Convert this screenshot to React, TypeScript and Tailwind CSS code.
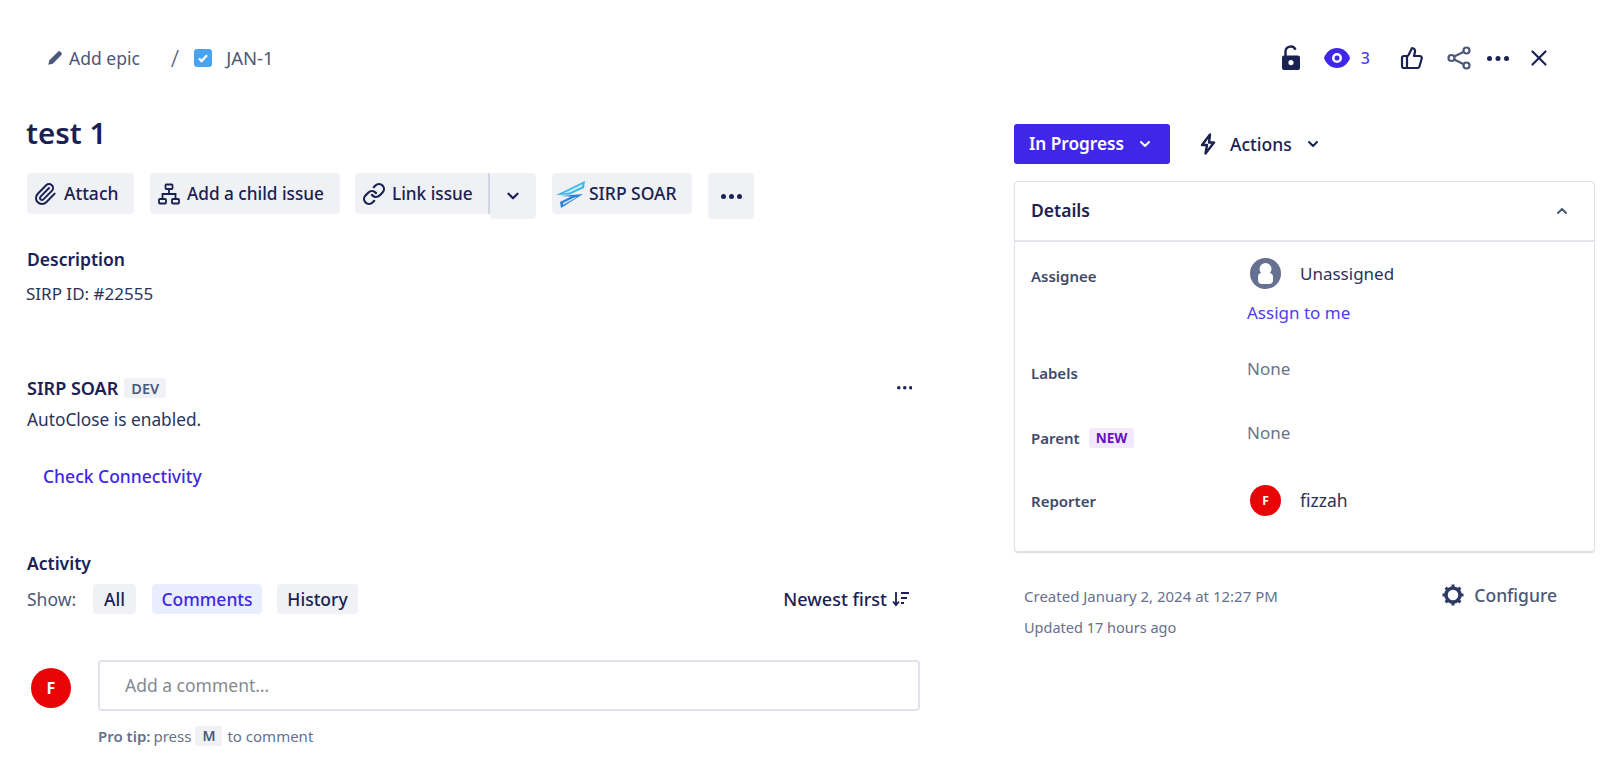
import { ChevronDown, ChevronUp, Link, Paperclip, ThumbsUp, X } from "lucide-react";

function Dots({ size = 4, gap = 3 }: { size?: number; gap?: number }) {
  return (
    <svg width={size * 3 + gap * 2} height={size} viewBox={`0 0 ${size * 3 + gap * 2} ${size}`} fill="#1a2153">
      <circle cx={size / 2} cy={size / 2} r={size / 2} />
      <circle cx={size * 1.5 + gap} cy={size / 2} r={size / 2} />
      <circle cx={size * 2.5 + gap * 2} cy={size / 2} r={size / 2} />
    </svg>
  );
}

function TreeIcon() {
  return (
    <svg width="24" height="24" viewBox="0 0 24 24" fill="none" stroke="#1a2153" strokeWidth="1.8">
      <rect x="8.5" y="2.5" width="7" height="4.5" rx="0.8" />
      <rect x="2" y="17" width="7" height="4.5" rx="0.8" />
      <rect x="15" y="17" width="7" height="4.5" rx="0.8" />
      <path d="M12 7v5M5.5 17v-5h13v5" />
    </svg>
  );
}

function SirpLogo() {
  return (
    <svg width="32" height="32" viewBox="0 0 32 32">
      <path d="M1 17 L30 3 L29 10 L15 16.500 Z" fill="#38b8e8" />
      <path d="M8 15.500 L27.500 6 L27 8.800 L15 14.500 Z" fill="#c5ebf8" />
      <path d="M5 18 L28 16 L6 30 L5 24 L16 18.500 Z" fill="#2f7fd8" />
      <path d="M8 24.800 L19 19.500 L22 19.200 L8 27 Z" fill="#c9def6" />
    </svg>
  );
}

function Btn({ children, className = "" }: { children: React.ReactNode; className?: string }) {
  return (
    <div className={`flex items-center h-[41px] bg-[#f0f1f4] rounded-[4px] text-[#1a2153] text-[17.5px] font-medium ${className}`}>
      {children}
    </div>
  );
}

function Avatar({ size, text }: { size: string; text: string }) {
  return (
    <div className={`${size} shrink-0 rounded-full bg-[#e80505] text-white font-bold flex items-center justify-center`}>
      <span className={text}>F</span>
    </div>
  );
}

function DetailRow({ label, children, className = "" }: { label: React.ReactNode; children: React.ReactNode; className?: string }) {
  return (
    <div className={`flex ${className}`}>
      <div className="w-[232px] pl-[16px] -mt-[1px] text-[15px] font-semibold text-[#3f4a6b] flex items-center gap-[9px] self-start h-[24px]">
        {label}
      </div>
      <div>{children}</div>
    </div>
  );
}

export default function App() {
  return (
    <div className="h-[783px] w-full bg-white overflow-hidden text-[17px] text-[#2b3358] font-['Noto_Sans',sans-serif]">
      <div className="flex items-center justify-between h-[40px] mt-[38px]">
        <div className="flex items-center pl-[46px] text-[#4c5878] text-[17.5px]">
          <svg width="18" height="18" viewBox="0 0 24 24" fill="#4c5878">
            <path d="M3 21l1.5-6L16 3.5a2.2 2.2 0 0 1 3 0l1.5 1.5a2.2 2.2 0 0 1 0 3L9 19.5 3 21z" />
          </svg>
          <span className="ml-[5px]">Add epic</span>
          <span className="ml-[31px] text-[24px] font-light">/</span>
          <div className="ml-[15px] w-[18px] h-[18px] rounded-[3px] bg-[#4aa3ee] flex items-center justify-center">
            <svg width="12" height="12" viewBox="0 0 12 12" fill="none" stroke="#fff" strokeWidth="2.2">
              <path d="M2 6.5l2.6 2.6L10 3.2" />
            </svg>
          </div>
          <span className="ml-[14px] text-[18.5px]">JAN-1</span>
        </div>
        <div className="flex items-center pr-[48px] text-[#1a2153]">
          <svg width="20" height="26" viewBox="0 0 20 26" fill="#1a2153">
            <path d="M4.5 11V6.5a5.2 5.2 0 0 1 10-1.8" fill="none" stroke="#1a2153" strokeWidth="2.4" />
            <path fillRule="evenodd" d="M3 10.5h14a2 2 0 0 1 2 2V23a2 2 0 0 1-2 2H3a2 2 0 0 1-2-2V12.500a2 2 0 0 1 2-2zM10 15a2.600 2.600 0 1 0 0 5.200 2.600 2.600 0 0 0 0-5.200z" />
          </svg>
          <svg className="ml-[23px]" width="26" height="20" viewBox="0 0 26 20">
            <path d="M0 10C2 4 7 0 13 0S24 4 26 10C24 16 19 20 13 20S2 16 0 10z" fill="#4027e8" />
            <circle cx="13" cy="10" r="5" fill="#fff" />
            <circle cx="13" cy="10" r="2.500" fill="#4027e8" />
          </svg>
          <span className="ml-[11px] text-[16px] font-medium text-[#4f3df0]">3</span>
          <ThumbsUp size={24} strokeWidth={2.200} className="ml-[30px]" />
          <svg className="ml-[23px]" width="24" height="24" viewBox="0 0 24 24" fill="none" stroke="#4c5878" strokeWidth="2.200">
            <circle cx="4.500" cy="12" r="3" />
            <circle cx="19.500" cy="4.500" r="3" />
            <circle cx="19.500" cy="19.500" r="3" />
            <path d="M7.200 10.600l9.600-4.800M7.200 13.400l9.600 4.800" />
          </svg>
          <div className="ml-[16px]">
            <Dots size={5} gap={3.500} />
          </div>
          <X size={26} strokeWidth={2} className="ml-[17px]" />
        </div>
      </div>

      <div className="flex">
        <div className="w-[920px] pl-[27px] shrink-0">
          <div className="text-[29.500px] leading-[40px] font-semibold text-[#1a2153] mt-[35px] -ml-px">test 1</div>
          <div className="flex items-start mt-[20px]">
            <Btn className="w-[107px] pl-[6px] gap-[7px]">
              <Paperclip size={24} strokeWidth={2} className="text-[#1a2153]" />
              Attach
            </Btn>
            <Btn className="w-[190px] ml-[16px] pl-[7px] gap-[6px]">
              <TreeIcon />
              <span className="text-[17.200px]">Add a child issue</span>
            </Btn>
            <Btn className="w-[135px] ml-[15px] pl-[7px] gap-[6px] border-r-2 border-[#d3d4dd] rounded-r-none">
              <Link size={24} strokeWidth={2.200} />
              <span className="text-[17.200px]">Link issue</span>
            </Btn>
            <div className="w-[46px] h-[46px] bg-[#f0f1f4] rounded-[4px] flex items-center justify-center">
              <ChevronDown size={18} strokeWidth={3} className="text-[#1a2153]" />
            </div>
            <Btn className="w-[140px] ml-[16px] pl-[3px] gap-[2px]">
              <SirpLogo />
              SIRP SOAR
            </Btn>
            <div className="w-[46px] h-[46px] ml-[16px] bg-[#f0f1f4] rounded-[4px] flex items-center justify-center">
              <Dots size={5} gap={3} />
            </div>
          </div>

          <div className="text-[17.5px] leading-[24px] font-semibold text-[#1a2153] mt-[28px]">Description</div>
          <div className="text-[17px] leading-[24px] text-[#2b3358] mt-[11px] -ml-px">SIRP ID: #22555</div>

          <div className="flex items-center justify-between mt-[70px] h-[24px] pr-[8px]">
            <div className="flex items-center gap-[6px]">
              <span className="text-[18px] font-semibold text-[#1a2153]">SIRP SOAR</span>
              <span className="text-[14.500px] leading-[20px] font-semibold text-[#4c5878] bg-[#f0f1f4] rounded-[3px] px-[7px]">DEV</span>
            </div>
            <Dots size={3.500} gap={2.500} />
          </div>
          <div className="text-[17.300px] leading-[24px] text-[#2b3358] mt-[8px]">AutoClose is enabled.</div>
          <div className="text-[17.5px] leading-[24px] font-medium text-[#4027e8] mt-[32px] ml-[16px]">Check Connectivity</div>

          <div className="text-[17.5px] leading-[24px] font-semibold text-[#1a2153] mt-[63px]">Activity</div>
          <div className="flex items-center mt-[9px] h-[30px]">
            <span className="w-[66px] text-[17.5px] text-[#4c5878]">Show:</span>
            <div className="w-[43px] h-[30px] rounded-[4px] bg-[#f0f1f4] text-[#1a2153] font-medium text-[17.5px] flex items-center justify-center">All</div>
            <div className="ml-[16px] w-[110px] h-[30px] rounded-[4px] bg-[#e8eefd] text-[#4027e8] font-medium text-[17.5px] flex items-center justify-center">Comments</div>
            <div className="ml-[15px] w-[81px] h-[30px] rounded-[4px] bg-[#f0f1f4] text-[#1a2153] font-medium text-[17.5px] flex items-center justify-center">History</div>
            <div className="ml-auto mr-[10px] flex items-center gap-[5px] text-[18px] font-medium text-[#1a2153]">
              Newest first
              <svg width="18" height="16" viewBox="0 0 18 16" fill="none" stroke="#1a2153" strokeWidth="1.800">
                <path d="M4 1v13M1 10.500l3 3.500 3-3.500M9 2h8M9 7h6M9 12h3" />
              </svg>
            </div>
          </div>

          <div className="flex mt-[46px]">
            <div className="pl-[4px] w-[71px] shrink-0 pt-[8px]">
              <Avatar size="w-[40px] h-[40px]" text="text-[16px]" />
            </div>
            <div className="flex-1">
              <div className="h-[51px] rounded-[4px] border-2 border-[#e2e3ea] flex items-center pl-[25px] text-[17.5px] text-[#858a94]">Add a comment…</div>
              <div className="flex items-center mt-[15px] text-[15px] text-[#67718c] h-[20px]">
                <span className="font-semibold">Pro tip:</span>
                <span className="ml-[3px]">press</span>
                <span className="ml-[4px] px-[7px] h-[20px] leading-[20px] rounded-[3px] bg-[#f0f1f4] font-semibold text-[14px] text-[#4c5878]">M</span>
                <span className="ml-[5px]">to comment</span>
              </div>
            </div>
          </div>
        </div>

        <div className="w-[581px] ml-[94px] shrink-0 pt-[46px]">
          <div className="flex items-center">
            <div className="w-[156px] h-[40px] bg-[#4027e8] rounded-[3px] text-white font-semibold text-[17.200px] flex items-center pl-[15px]">
              In Progress
              <ChevronDown size={16} strokeWidth={3} className="ml-[13px]" />
            </div>
            <svg className="ml-[29px]" width="18" height="22" viewBox="0 0 18 22" fill="none" stroke="#1a2153" strokeWidth="2.400" strokeLinejoin="round">
              <path d="M11 1.500L3 12h5l-1.500 8.500L15 9.500h-5z" />
            </svg>
            <span className="ml-[13px] text-[17.5px] font-medium text-[#1a2153]">Actions</span>
            <ChevronDown size={16} strokeWidth={3} className="ml-[13px] text-[#1a2153]" />
          </div>
          <div className="mt-[17px] h-[371px] rounded-[4px] border border-[#dfe1e8] shadow-[0_1px_1px_#d8dae0]">
            <div className="h-[60px] border-b-2 border-[#e4e5ec] flex items-center justify-between pl-[16px] pr-[24px]">
              <span className="text-[17.5px] font-semibold text-[#1a2153] -mt-[2px]">Details</span>
              <ChevronUp size={16} strokeWidth={3} className="text-[#4c5878]" />
            </div>
            <DetailRow label="Assignee" className="mt-[23px]">
              <div className="flex items-center -mt-[7px]">
                <svg className="ml-[3px]" width="31" height="31" viewBox="0 0 31 31">
                  <circle cx="15.500" cy="15.500" r="15.500" fill="#667090" />
                  <circle cx="15.500" cy="11" r="6" fill="#fff" />
                  <rect x="8" y="15" width="15" height="11" rx="4" fill="#fff" />
                </svg>
                <span className="ml-[19px] text-[17px] text-[#2b3358]">Unassigned</span>
              </div>
              <div className="text-[17px] leading-[24px] text-[#4f3df0] mt-[12px]">Assign to me</div>
            </DetailRow>
            <DetailRow label="Labels" className="mt-[37px]">
              <div className="text-[17px] leading-[24px] text-[#6b7388] -mt-[5px]">None</div>
            </DetailRow>
            <DetailRow
              label={
                <>
                  Parent
                  <span className="text-[13.500px] leading-[20px] font-bold text-[#6a0dc4] bg-[#f2e9fc] rounded-[3px] px-[7px]">NEW</span>
                </>
              }
              className="mt-[42px]"
            >
              <div className="text-[17px] leading-[24px] text-[#6b7388] -mt-[6px]">None</div>
            </DetailRow>
            <DetailRow label="Reporter" className="mt-[40px]">
              <div className="flex items-center -mt-[5px]">
                <div className="ml-[3px]">
                  <Avatar size="w-[31px] h-[31px]" text="text-[12px]" />
                </div>
                <span className="ml-[19px] text-[17.5px] text-[#2b3358]">fizzah</span>
              </div>
            </DetailRow>
          </div>
          <div className="flex justify-between mt-[32px] pl-[10px] pr-[38px]">
            <div className="text-[15px] text-[#67718c]">
              <div className="leading-[24px]">Created January 2, 2024 at 12:27 PM</div>
              <div className="leading-[24px] mt-[7px] text-[14.500px]">Updated 17 hours ago</div>
            </div>
            <div className="flex items-center gap-[9px] h-[24px] -mt-px text-[17.5px] font-medium text-[#4c5878]">
              <svg width="24" height="24" viewBox="0 0 24 24" fill="none" stroke="#2e3a63" strokeWidth="3.500">
                <circle cx="12" cy="12" r="7" />
                <path d="M12 1.500v3M12 19.500v3M1.500 12h3M19.500 12h3M4.600 4.600l2.100 2.100M17.300 17.300l2.100 2.100M4.600 19.400l2.100-2.100M17.300 6.700l2.100-2.100" strokeWidth="3" />
              </svg>
              Configure
            </div>
          </div>
        </div>
      </div>
    </div>
  );
}
